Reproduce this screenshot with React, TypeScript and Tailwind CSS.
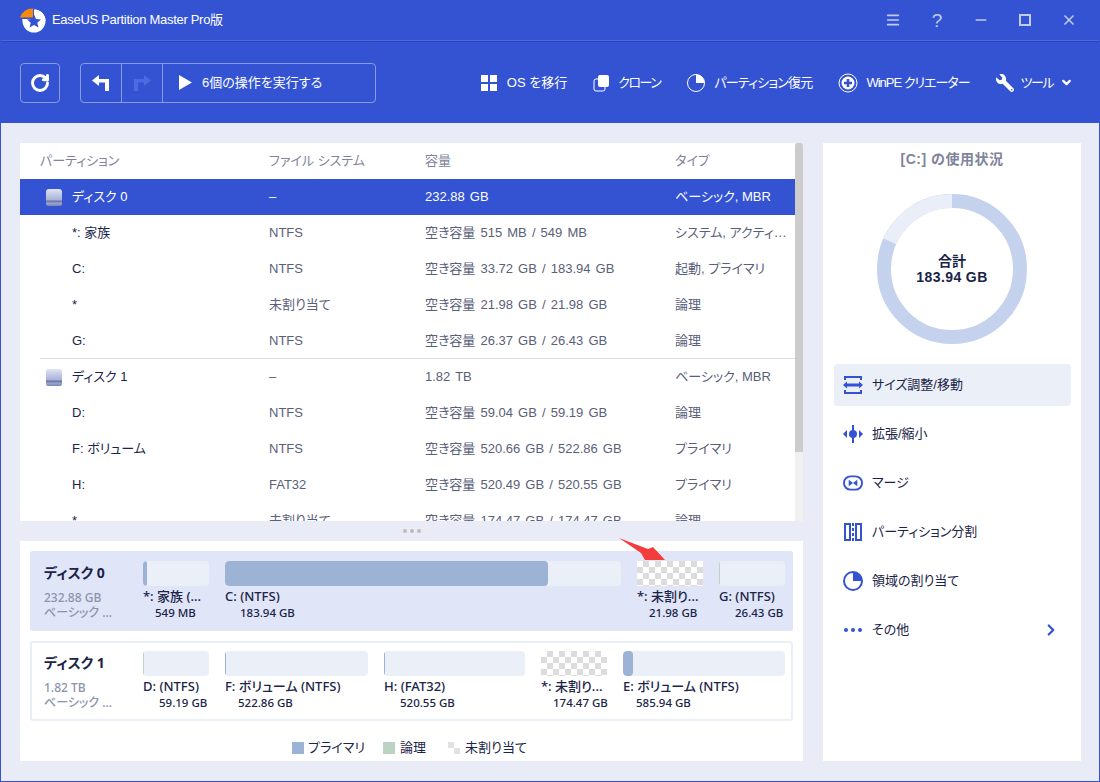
import { ChevronDown, ChevronRight, RotateCw, Menu, Minus, X } from "lucide-react";
import { FaWrench } from "react-icons/fa";
import type { ReactNode } from "react";

const rows = [
  { name: "ディスク 0", fs: "–", cap: "232.88 GB", type: "ベーシック, MBR", disk: true, active: true },
  { name: "*: 家族", fs: "NTFS", cap: "空き容量 515 MB / 549 MB", type: "システム, アクティ…" },
  { name: "C:", fs: "NTFS", cap: "空き容量 33.72 GB / 183.94 GB", type: "起動, プライマリ" },
  { name: "*", fs: "未割り当て", cap: "空き容量 21.98 GB / 21.98 GB", type: "論理" },
  { name: "G:", fs: "NTFS", cap: "空き容量 26.37 GB / 26.43 GB", type: "論理", divider: true },
  { name: "ディスク 1", fs: "–", cap: "1.82 TB", type: "ベーシック, MBR", disk: true },
  { name: "D:", fs: "NTFS", cap: "空き容量 59.04 GB / 59.19 GB", type: "論理" },
  { name: "F: ボリューム", fs: "NTFS", cap: "空き容量 520.66 GB / 522.86 GB", type: "プライマリ" },
  { name: "H:", fs: "FAT32", cap: "空き容量 520.49 GB / 520.55 GB", type: "プライマリ" },
];

function Logo() {
  return (
    <svg width="28" height="26" viewBox="0 0 28 26" className="shrink-0">
      <circle cx="15" cy="14" r="11.5" fill="#fff" />
      <path d="M15 12 L15 0 L0 0 L0 12 Z" fill="#3353d3" />
      <path d="M14 10.500 L14 1.500 A13 13 0 0 0 1 10.500 Z" fill="#f58a0c" />
      <path d="M15.500 2.500 A11.500 11.500 0 0 1 26.500 14 L15.500 14 Z" fill="#fff" />
      <path d="M3.500 12.500 H15 V14 H3.500 Z" fill="#fff" />
      <path d="M15 7.500 L17 12 L22 12.500 L18.300 15.800 L19.400 20.500 L15 18 L10.600 20.500 L11.700 15.800 L8 12.500 L13 12 Z" fill="#3353d3" />
    </svg>
  );
}

function DiskIcon() {
  return (
    <div className="h-[17px] w-4 rounded-t-[3px] rounded-b-[2px] bg-[linear-gradient(#dfe3f5,#aab4da_62%,#6a76a8_72%,#9aa4cc_84%,#7b86b8)]" />
  );
}

function ToolItem({ icon, label, textClass, gapClass }: { icon: ReactNode; label: string; textClass?: string; gapClass: string }) {
  return (
    <div className={`flex items-center text-[13px] text-white ${gapClass}`}>
      {icon}
      <span className={textClass}>{label}</span>
    </div>
  );
}

function ActionItem({ icon, label, active, arrow }: { icon: ReactNode; label: string; active?: boolean; arrow?: boolean }) {
  return (
    <div className={`flex h-[42px] items-center gap-[9px] rounded-sm pl-[9px] pr-[11px] text-[13px] text-[#1a2447] ${active ? "bg-[#ebeff8]" : ""}`}>
      <span className="flex w-5 justify-center">{icon}</span>
      <span className="flex-1">{label}</span>
      {arrow && <ChevronRight size={18} strokeWidth={3} color="#3353d3" />}
    </div>
  );
}

function Part({ label, size, fill, bar, checker, wide, sizeClass }: { label: string; size: string; fill?: number; bar?: string; checker?: boolean; wide: string; sizeClass: string }) {
  return (
    <div className={`flex flex-col ${wide}`}>
      {checker ? (
        <div className="h-[25px] bg-[repeating-conic-gradient(#dcdcdc_0_25%,#ffffff_0_50%)] bg-[length:12px_12px]" />
      ) : (
        <div className="flex h-[25px] overflow-hidden rounded-sm bg-[#ebeff8]">
          <div className={`rounded-sm ${bar}`} style={{ width: fill }} />
        </div>
      )}
      <div className="whitespace-nowrap text-[13px] font-medium leading-[20px] text-[#1a2447]">{label}</div>
      <div className={`whitespace-nowrap text-[11.5px] font-medium leading-[14px] text-[#1a2447] ${sizeClass}`}>{size}</div>
    </div>
  );
}

function DiskCard({ name, size, selected, children }: { name: string; size: string; selected?: boolean; children: ReactNode }) {
  return (
    <div className={`flex h-20 shrink-0 rounded-[3px] ${selected ? "bg-[#e0e5f8] pl-[14px] pr-2 pt-[10px]" : "border-2 border-[#e9eef7] pl-[12px] pr-[6px] pt-2"}`}>
      <div className="w-[99px] shrink-0 pt-[2px]">
        <div className="text-[14px] font-bold leading-5 text-[#1a2447]">{name}</div>
        <div className="mt-[7px] text-[12px] font-medium leading-[15px] text-[#8d93ad]">{size}</div>
        <div className="text-[12px] font-medium leading-[15px] text-[#8d93ad]">ベーシック ...</div>
      </div>
      <div className="flex flex-1 gap-4">{children}</div>
    </div>
  );
}

export default function App() {
  return (
    <div className="flex h-[782px] w-[1100px] flex-col overflow-hidden border-x border-b border-[#3353d3] bg-[#e9ecf7] font-['Noto_Sans','Noto_Sans_CJK_JP',sans-serif] [font-feature-settings:'palt']">
      <header className="bg-[#3353d3] font-['Liberation_Sans','Noto_Sans_CJK_JP',sans-serif]">
        <div className="flex h-[41px] items-center border-b border-[#4a68e0] pl-[18px] pr-2">
          <Logo />
          <span className="ml-[5px] text-[13px] tracking-[-0.3px] text-white">EaseUS Partition Master Pro版</span>
          <div className="ml-auto flex items-center text-[#c3ccf0]">
            <div className="flex w-11 justify-center"><Menu size={16} strokeWidth={2.5} /></div>
            <div className="flex w-11 justify-center text-[19px] leading-none">?</div>
            <div className="flex w-11 justify-center"><Minus size={16} strokeWidth={2.5} /></div>
            <div className="flex w-11 justify-center"><div className="h-3 w-3 border-2 border-[#c3ccf0]" /></div>
            <div className="flex w-11 justify-center"><X size={16} strokeWidth={2.5} /></div>
          </div>
        </div>
        <div className="flex h-[82px] items-center border-t border-[#2a45b8] pl-[19px] pr-[26px]">
          <div className="flex h-10 w-10 items-center justify-center rounded-sm border border-[#8a9be6]">
            <RotateCw size={20} strokeWidth={3.5} color="#fff" />
          </div>
          <div className="ml-5 flex h-10 w-[296px] items-center rounded-sm border border-[#8a9be6]">
            <div className="flex h-full w-[41px] items-center justify-center border-r border-[#8a9be6]">
              <svg width="18" height="16" viewBox="0 0 18 16"><path d="M7 0 L0 5.500 L7 11 V7.500 H13 V16 H17 V4 H7 Z" fill="#fff" /></svg>
            </div>
            <div className="flex h-full w-[41px] items-center justify-center border-r border-[#8a9be6]">
              <svg width="18" height="16" viewBox="0 0 18 16"><path d="M11 0 L18 5.500 L11 11 V7.500 H5 V16 H1 V4 H11 Z" fill="#4d6ae0" /></svg>
            </div>
            <svg width="13" height="15" viewBox="0 0 13 15" className="ml-4"><path d="M0 0 L13 7.500 L0 15 Z" fill="#fff" /></svg>
            <span className="ml-[10px] text-[13px] text-white">6個の操作を実行する</span>
          </div>
          <div className="ml-auto flex items-center gap-[26px]">
            <ToolItem label="OS を移行" gapClass="gap-[10px]" icon={
              <svg width="16" height="16" viewBox="0 0 16 16" fill="#fff"><rect width="7" height="7" /><rect x="9" width="7" height="7" /><rect y="9" width="7" height="7" /><rect x="9" y="9" width="7" height="7" /></svg>
            } />
            <ToolItem label="クローン" gapClass="gap-[9px]" textClass="tracking-[-1.5px]" icon={
              <svg width="16" height="18" viewBox="0 0 16 18"><rect x="1" y="5" width="11" height="12" rx="2" fill="none" stroke="#fff" /><rect x="5" y="1" width="11" height="12" rx="2" fill="#fff" /></svg>
            } />
            <ToolItem label="パーティション復元" gapClass="gap-2" textClass="tracking-[-0.8px]" icon={
              <svg width="20" height="20" viewBox="0 0 20 20"><circle cx="10" cy="10" r="8.500" fill="none" stroke="#fff" /><path d="M10 1.500 A8.500 8.500 0 0 1 18.500 10 H10 Z" fill="#fff" /></svg>
            } />
            <ToolItem label="WinPE クリエーター" gapClass="gap-2" textClass="tracking-[-1px]" icon={
              <svg width="20" height="20" viewBox="0 0 20 20"><circle cx="10" cy="10" r="9" fill="none" stroke="#fff" /><circle cx="10" cy="10" r="6.500" fill="#fff" /><path d="M8.700 6 h2.600 v2.700 h2.700 v2.600 h-2.700 v2.700 h-2.600 v-2.700 h-2.700 v-2.600 h2.700 Z" fill="#3353d3" /></svg>
            } />
            <div className="flex items-center gap-[7px] text-[13px] text-white">
              <FaWrench size={18} color="#fff" className="-scale-x-100" />
              <span className="tracking-[-1.5px]">ツール</span>
              <ChevronDown size={13} strokeWidth={4} />
            </div>
          </div>
        </div>
      </header>

      <main className="flex flex-1 gap-5 pb-5 pl-[19px] pr-[18px] pt-5">
        <div className="flex w-[783px] flex-col">
          <section className="flex h-[378px] overflow-hidden bg-white font-['Liberation_Sans','Noto_Sans_CJK_JP',sans-serif]">
            <div className="w-[775px] text-[13px]">
              <div className="grid h-9 grid-cols-[229px_156px_250px_1fr] items-center pl-5 text-[#7f849b]">
                <span>パーティション</span>
                <span>ファイル システム</span>
                <span>容量</span>
                <span>タイプ</span>
              </div>
              {rows.map((r, i) => (
                <div key={i} className={`relative grid h-9 grid-cols-[229px_156px_250px_1fr] items-center pl-5 ${r.active ? "bg-[#3353d3] text-white" : "text-[#5a6078]"}`}>
                  <div className={`flex items-center gap-[10px] pl-[6px] ${r.active ? "" : "text-[#1a2447]"}`}>
                    {r.disk ? <DiskIcon /> : <div className="w-4" />}
                    <span>{r.name}</span>
                  </div>
                  <span>{r.fs}</span>
                  <span className="[word-spacing:1.5px]">{r.cap}</span>
                  <span className="whitespace-nowrap">{r.type}</span>
                  {r.divider && <div className="absolute bottom-0 left-5 right-0 h-px bg-[#dcdfe9]" />}
                </div>
              ))}
              <div className="grid h-[18px] grid-cols-[229px_156px_250px_1fr] overflow-hidden pl-5 pt-[9px] leading-[18px] text-[#5a6078]">
                <span className="pl-8 text-[#1a2447]">*</span>
                <span>未割り当て</span>
                <span className="[word-spacing:1.5px]">空き容量 174.47 GB / 174.47 GB</span>
                <span>論理</span>
              </div>
            </div>
            <div className="w-2 bg-[#f1f1f1]">
              <div className="h-[309px] rounded-t-[3px] bg-[#cccccc]" />
            </div>
          </section>

          <div className="flex h-5 items-center justify-center gap-[3px]">
            <div className="h-[4px] w-[4px] rounded-full bg-[#bbbbbb]" />
            <div className="h-[4px] w-[4px] rounded-full bg-[#bbbbbb]" />
            <div className="h-[4px] w-[4px] rounded-full bg-[#bbbbbb]" />
          </div>

          <section className="relative flex h-[220px] flex-col gap-[10px] bg-white px-[10px] pt-[10px]">
            <DiskCard name="ディスク 0" size="232.88 GB" selected>
              <Part wide="w-[66px]" label="*: 家族 (..." size="549 MB" sizeClass="pl-3" fill={4} bar="bg-[#9cb3d6]" />
              <Part wide="w-[396px]" label="C: (NTFS)" size="183.94 GB" sizeClass="pl-[15px]" fill={323} bar="bg-[#9cb3d6]" />
              <Part wide="w-[66px]" label="*: 未割り..." size="21.98 GB" sizeClass="pl-3" checker />
              <Part wide="w-[66px]" label="G: (NTFS)" size="26.43 GB" sizeClass="pl-4" fill={1} bar="bg-[#bcd3c4]" />
            </DiskCard>
            <DiskCard name="ディスク 1" size="1.82 TB">
              <Part wide="w-[66px]" label="D: (NTFS)" size="59.19 GB" sizeClass="pl-4" fill={1} bar="bg-[#bcd3c4]" />
              <Part wide="w-[143px]" label="F: ボリューム (NTFS)" size="522.86 GB" sizeClass="pl-[13px]" fill={1} bar="bg-[#9cb3d6]" />
              <Part wide="w-[141px]" label="H: (FAT32)" size="520.55 GB" sizeClass="pl-4" fill={1} bar="bg-[#9cb3d6]" />
              <Part wide="w-[66px]" label="*: 未割り..." size="174.47 GB" sizeClass="pl-3" checker />
              <Part wide="w-[162px]" label="E: ボリューム (NTFS)" size="585.94 GB" sizeClass="pl-[13px]" fill={10} bar="bg-[#9cb3d6]" />
            </DiskCard>
            <div className="flex h-[30px] items-center justify-center gap-[22px] pr-1 pt-[4px] font-['Liberation_Sans','Noto_Sans_CJK_JP',sans-serif] text-[13px] text-[#1a2447]">
              <div className="-mr-1 flex items-center gap-1"><div className="h-3 w-3 bg-[#9cb3d6]" />プライマリ</div>
              <div className="flex items-center gap-[5px]"><div className="h-3 w-3 bg-[#bcd3c4]" />論理</div>
              <div className="flex items-center gap-[5px]"><div className="h-3 w-3 bg-[repeating-conic-gradient(#ffffff_0_25%,#e2e2e2_0_50%)] bg-[length:12px_12px]" />未割り当て</div>
            </div>
            <svg width="50" height="28" viewBox="0 0 50 28" className="absolute left-[597px] top-[-4px]">
              <path d="M2 1 L31 12 L36 10 L48 23 L28 23 L24 16 Z" fill="#f53c3c" />
            </svg>
          </section>
        </div>

        <aside className="flex w-[258px] flex-col bg-white pl-[11px] pr-[10px] font-['Liberation_Sans','Noto_Sans_CJK_JP',sans-serif]">
          <div className="pr-px pt-[6px] text-center text-[14px] font-bold tracking-[0.5px] text-[#7f849b]">[C:] の使用状況</div>
          <div className="mt-6 flex justify-center pr-px">
            <div className="relative h-[150px] w-[150px]">
              <svg width="150" height="150" viewBox="0 0 150 150">
                <circle cx="75" cy="75" r="68" fill="none" stroke="#c5d2ee" strokeWidth="14" />
                <path d="M75 7 A68 68 0 0 0 12.900 47.300" fill="none" stroke="#e9eef8" strokeWidth="14" />
              </svg>
              <div className="absolute inset-0 flex flex-col items-center justify-center text-[14px] font-bold leading-4 text-[#1a2447]">
                <span>合計</span>
                <span className="tracking-[0.4px]">183.94 GB</span>
              </div>
            </div>
          </div>
          <div className="mt-5 flex flex-col gap-[7px]">
            <ActionItem active label="サイズ調整/移動" icon={
              <svg width="20" height="18" viewBox="0 0 20 18" fill="#3353d3"><path d="M1 0 H19 V4 H17 V2 H3 V4 H1 Z M1 18 H19 V14 H17 V16 H3 V14 H1 Z" /><path d="M0 9 L4 5.500 V7.500 H16 V5.500 L20 9 L16 12.500 V10.500 H4 V12.500 Z" /></svg>
            } />
            <ActionItem label="拡張/縮小" icon={
              <svg width="20" height="18" viewBox="0 0 20 18" fill="#3353d3"><rect x="9" width="2" height="18" /><circle cx="10" cy="9" r="4" /><path d="M0 9 L4 5 V13 Z M20 9 L16 5 V13 Z" /></svg>
            } />
            <ActionItem label="マージ" icon={
              <svg width="21" height="16" viewBox="0 0 21 16"><rect x="1" y="1" width="19" height="14" rx="7" fill="none" stroke="#3353d3" strokeWidth="2" /><path d="M6 4.500 V11.500 L10.500 8 Z M15 4.500 V11.500 L10.500 8 Z" fill="#3353d3" /></svg>
            } />
            <ActionItem label="パーティション分割" icon={
              <svg width="18" height="18" viewBox="0 0 18 18" fill="none" stroke="#3353d3" strokeWidth="2"><rect x="1" y="1" width="5" height="16" /><rect x="12" y="1" width="5" height="16" /><path d="M9 0 V18" strokeDasharray="3 2" /></svg>
            } />
            <ActionItem label="領域の割り当て" icon={
              <svg width="20" height="20" viewBox="0 0 20 20"><circle cx="10" cy="10" r="9" fill="none" stroke="#3353d3" strokeWidth="2" /><path d="M10 1 A9 9 0 0 1 19 10 H10 Z" fill="#3353d3" /></svg>
            } />
            <ActionItem label="その他" arrow icon={
              <svg width="18" height="4" viewBox="0 0 18 4" fill="#3353d3"><circle cx="2" cy="2" r="2" /><circle cx="9" cy="2" r="2" /><circle cx="16" cy="2" r="2" /></svg>
            } />
          </div>
        </aside>
      </main>
    </div>
  );
}
